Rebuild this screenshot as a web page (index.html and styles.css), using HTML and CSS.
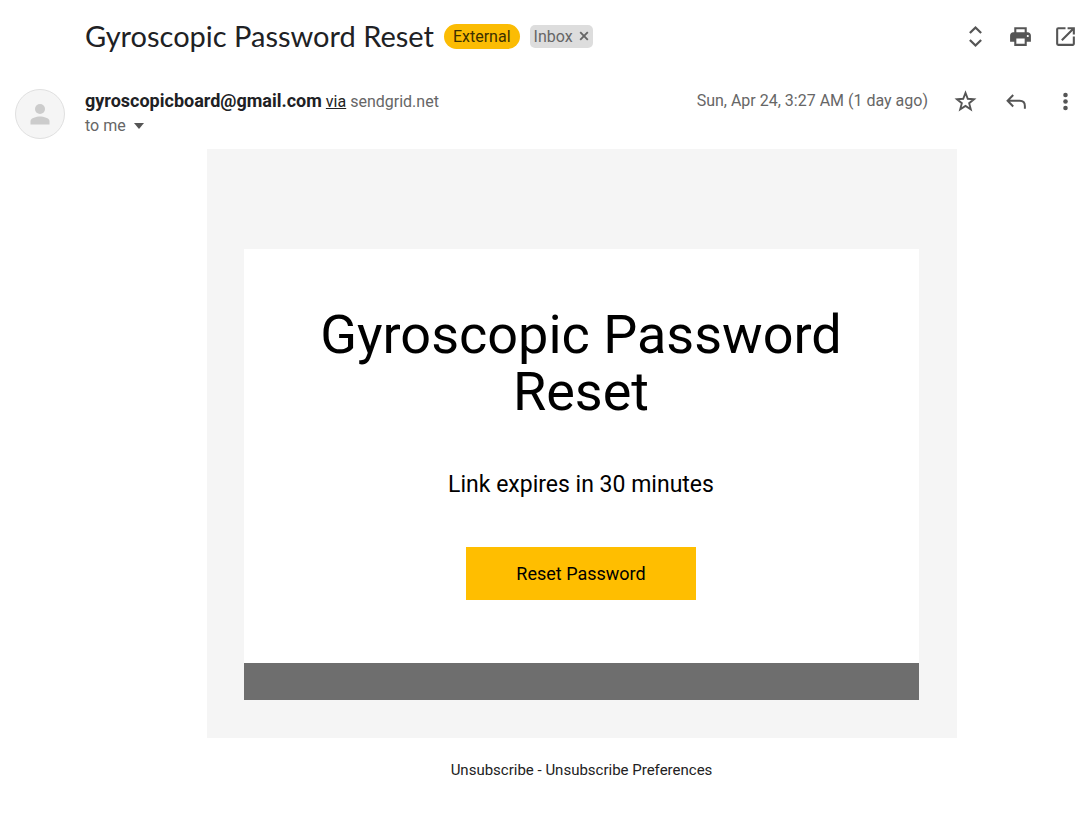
FILE: index.html
```html
<!DOCTYPE html>
<html lang="en">
<head>
<meta charset="utf-8">
<meta name="viewport" content="width=device-width, initial-scale=1">
<title>Gyroscopic Password Reset</title>
<link rel="stylesheet" href="styles.css">
</head>
<body>
<main class="mail">
  <header class="subject-row">
    <h1 class="subject">Gyroscopic Password Reset</h1>
    <span class="tag tag-external">External</span>
    <span class="tag tag-inbox">Inbox
      <button class="tag-remove" type="button" aria-label="Remove label Inbox">
        <svg viewBox="0 0 10 10" width="10" height="10"><path d="M1.2 1.2l7.6 7.6M8.8 1.2L1.2 8.8" fill="none" stroke="#666" stroke-width="1.9"/></svg>
      </button>
    </span>
    <div class="tools">
      <button class="icon-button" type="button" aria-label="Expand all">
        <svg viewBox="0 0 24 24" width="25" height="25"><path d="M6.600 8.600L12 3.400l5.400 5.200M6.600 15.400l5.400 5.200 5.400-5.200" fill="none" stroke="#555" stroke-width="2.200"/></svg>
      </button>
      <button class="icon-button" type="button" aria-label="Print all">
        <svg viewBox="0 0 24 24" width="25" height="25"><path fill-rule="evenodd" d="M19 8h-1V3H6v5H5c-1.66 0-3 1.34-3 3v6h4v4h12v-4h4v-6c0-1.66-1.34-3-3-3zM8 5h8v3H8V5zm8 14H8v-5h8v5zm3-6.5c-.55 0-1-.45-1-1s.45-1 1-1 1 .45 1 1-.45 1-1 1z"/></svg>
      </button>
      <button class="icon-button" type="button" aria-label="Open in new window">
        <svg viewBox="0 0 24 24" width="25" height="25"><path d="M19 19H5V5h7V3H5a2 2 0 0 0-2 2v14a2 2 0 0 0 2 2h14c1.1 0 2-.9 2-2v-7h-2v7zM14 3v2h3.59l-9.83 9.83 1.41 1.41L19 6.41V10h2V3h-7z"/></svg>
      </button>
    </div>
  </header>

  <section class="sender-row">
    <div class="avatar">
      <svg viewBox="0 0 20 22" width="20" height="22"><circle cx="10" cy="6" r="5"/><path d="M.5 21.500v-3.500c0-3 6-4.500 9.500-4.500s9.500 1.500 9.500 4.500v3.500z"/></svg>
    </div>
    <div class="sender">
      <div class="sender-line"><strong class="address">gyroscopicboard@gmail.com</strong> <a class="via" href="#via">via</a> <span>sendgrid.net</span></div>
      <button class="recipient" type="button">to me
        <svg viewBox="0 0 10 6" width="10" height="6"><path d="M0 0h10L5 6z"/></svg>
      </button>
    </div>
    <time class="date">Sun, Apr 24, 3:27 AM (1 day ago)</time>
    <div class="tools">
      <button class="icon-button" type="button" aria-label="Star">
        <svg viewBox="0 0 24 24" width="25" height="25"><path d="M12 3.700l2.200 5.700 6 .400-4.700 3.800 1.600 5.900-5.100-3.300-5.100 3.300 1.600-5.900-4.700-3.800 6-.400z" fill="none" stroke="#555" stroke-width="1.800"/></svg>
      </button>
      <button class="icon-button" type="button" aria-label="Reply">
        <svg viewBox="0 0 24 24" width="25" height="25"><path d="M9.800 5.800L4.400 11.300l5.400 5.500M4.800 11.300h11.200c3 0 5 2 5 5v2.700" fill="none" stroke="#555" stroke-width="1.900"/></svg>
      </button>
      <button class="icon-button" type="button" aria-label="More">
        <svg viewBox="0 0 24 24" width="25" height="25"><circle cx="12" cy="5.800" r="2.200"/><circle cx="12" cy="12" r="2.200"/><circle cx="12" cy="18.200" r="2.200"/></svg>
      </button>
    </div>
  </section>

  <article class="message">
    <div class="panel">
      <div class="card">
        <h2 class="headline">Gyroscopic Password Reset</h2>
        <p class="note">Link expires in 30 minutes</p>
        <a class="reset" href="#reset">Reset Password</a>
      </div>
      <div class="bar"></div>
    </div>
    <p class="unsubscribe"><a href="#unsubscribe">Unsubscribe</a> - <a href="#preferences">Unsubscribe Preferences</a></p>
  </article>
</main>
</body>
</html>
```
FILE: styles.css
```css
* {
  box-sizing: border-box;
}

body {
  margin: 0;
  background: #fff;
  color: #666;
  font-family: Roboto, "Liberation Sans", sans-serif;
  font-size: 16px;
  line-height: 24px;
}

button {
  padding: 0;
  border: 0;
  background: none;
  color: inherit;
  font: inherit;
  cursor: pointer;
}

svg {
  display: block;
  fill: #555;
}

.mail {
  padding: 12px 12px 40px 15px;
}

.subject-row {
  display: flex;
  align-items: center;
  min-height: 48px;
  padding-left: 70px;
}

.subject {
  margin: 0 10px 0 0;
  color: #202124;
  font-family: Lato, sans-serif;
  font-size: 29px;
  font-weight: 400;
  line-height: 36px;
}

.tag {
  display: flex;
  align-items: center;
  gap: 6px;
  margin-right: 10px;
}

.tag-external {
  padding: 0 9px;
  border-radius: 13px;
  background: #fbbc04;
  color: #3c3000;
  line-height: 25px;
}

.tag-inbox {
  padding: 0 4px;
  border-radius: 5px;
  background: #ddd;
  line-height: 23px;
}

.tools {
  display: flex;
  gap: 20px;
  margin-left: auto;
}

.sender-row {
  display: flex;
  align-items: flex-start;
  padding-top: 29px;
}

.sender-row .tools {
  gap: 25px;
  margin-left: 25px;
}

.avatar {
  display: grid;
  place-items: center;
  width: 50px;
  height: 50px;
  margin-right: 20px;
  border: 1px solid #e0e0e0;
  border-radius: 50%;
  background: #f5f5f5;
}

.avatar svg {
  fill: #ccc;
}

.sender {
  flex: 1;
}

.address {
  color: #202124;
  font-size: 18px;
  font-weight: 700;
}

.via {
  color: #222;
}

.recipient {
  display: flex;
  align-items: center;
  gap: 8px;
}

.message {
  padding: 10px 0 0 70px;
}

.panel {
  max-width: 750px;
  margin: 0 auto;
  padding: 100px 38px 38px 37px;
  background: #f5f5f5;
}

.card {
  display: flex;
  flex-direction: column;
  align-items: center;
  padding: 57px 60px 63px;
  background: #fff;
  color: #000;
  text-align: center;
}

.headline {
  margin: 0 0 52px;
  font-size: 54px;
  font-weight: 400;
  line-height: 57px;
}

.note {
  margin: 0 0 49px;
  font-size: 23px;
  line-height: 26px;
}

.reset {
  padding: 0 50px;
  background: #ffbe00;
  color: #000;
  font-size: 18px;
  line-height: 53px;
  text-decoration: none;
}

.bar {
  height: 37px;
  background: #6e6e6e;
}

.unsubscribe {
  margin: 20px 0 0;
  color: #222;
  font-size: 15px;
  text-align: center;
}

.unsubscribe a {
  color: inherit;
  text-decoration: none;
}
```
